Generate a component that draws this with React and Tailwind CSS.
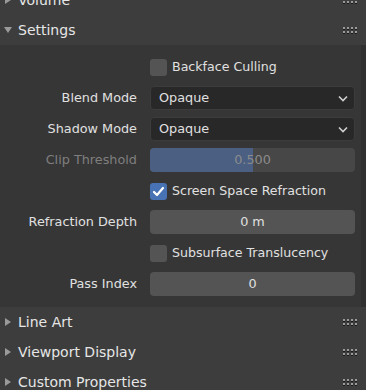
const font = { fontFamily: '"DejaVu Sans", sans-serif' };

function Grip() {
  return (
    <div className="grid grid-cols-4 gap-x-[2px] gap-y-[2px] mr-[9px]">
      {Array.from({ length: 8 }).map((_, i) => (
        <div key={i} className="w-[2px] h-[2px] bg-[#9a9a9a] shadow-[0_1px_0_#1a1a1a]" />
      ))}
    </div>
  );
}

function Header({ title, open }) {
  return (
    <div className="h-[30px] flex items-center bg-[#3d3d3d] text-[#e6e6e6] text-[14px]">
      <div className="w-[18px] flex justify-center">
        {open ? (
          <svg width="8" height="6" viewBox="0 0 8 6" className="ml-[-3px]">
            <path d="M0 0 L8 0 L4 6 Z" fill="#9a9a9a" />
          </svg>
        ) : (
          <svg width="6" height="8" viewBox="0 0 6 8" className="ml-[-3px]">
            <path d="M0 0 L6 4 L0 8 Z" fill="#9a9a9a" />
          </svg>
        )}
      </div>
      <span className="flex-1">{title}</span>
      <Grip />
    </div>
  );
}

function Row({ label, dim, children }) {
  return (
    <div className="h-[24px] flex items-center">
      <div className={`w-[137px] text-right text-[12.8px] ${dim ? "text-[#7f7f7f]" : "text-[#e0e0e0]"}`}>
        {label}
      </div>
      <div className="ml-[13px] w-[205px] h-full">{children}</div>
    </div>
  );
}

function Check({ checked, label }) {
  return (
    <div className="h-[24px] flex items-center pl-[150px]">
      <div
        className={`w-[17px] h-[17px] rounded-[3px] flex items-center justify-center ${
          checked ? "bg-[#4772b3]" : "bg-[#545454]"
        }`}
      >
        {checked && (
          <svg width="13" height="13" viewBox="0 0 13 13">
            <path d="M2 7 L5 10 L11 3" stroke="#fff" strokeWidth="2.2" fill="none" strokeLinecap="round" strokeLinejoin="round" />
          </svg>
        )}
      </div>
      <span className="ml-[5px] text-[12.6px] text-[#e0e0e0]">{label}</span>
    </div>
  );
}

function Select({ value }) {
  return (
    <div className="h-full rounded-[4px] bg-[#282828] border border-[#3c3c3c] flex items-center pl-[8px] pr-[6px] text-[12.8px] text-[#e0e0e0]">
      <span className="flex-1">{value}</span>
      <svg width="10" height="7" viewBox="0 0 10 7">
        <path d="M1 1.5 L5 5.5 L9 1.5" stroke="#d0d0d0" strokeWidth="1.6" fill="none" />
      </svg>
    </div>
  );
}

function Num({ value }) {
  return (
    <div className="h-full rounded-[4px] bg-[#545454] flex items-center justify-center text-[12.8px] text-[#e0e0e0]">
      {value}
    </div>
  );
}

function Slider({ value, frac }) {
  return (
    <div className="relative h-full rounded-[4px] bg-[#474747] overflow-hidden flex items-center justify-center text-[12.8px] text-[#8c8c8c]">
      <div className="absolute left-0 top-0 bottom-0 bg-[#4a5f82]" style={{ width: `${frac * 100}%` }} />
      <span className="relative">{value}</span>
    </div>
  );
}

export default function App() {
  return (
    <div className="w-[366px] h-[390px] overflow-hidden bg-[#303030]" style={font}>
      <div className="h-[15px] overflow-hidden flex flex-col justify-end">
        <div className="shrink-0">
          <Header title="Volume" />
        </div>
      </div>
      <Header title="Settings" open />
      <div className="flex">
        <div className="w-[361px] bg-[#363636] pt-[10px] pb-[11px] flex flex-col gap-[7px]">
          <Check label="Backface Culling" />
          <Row label="Blend Mode">
            <Select value="Opaque" />
          </Row>
          <Row label="Shadow Mode">
            <Select value="Opaque" />
          </Row>
          <Row label="Clip Threshold" dim>
            <Slider value="0.500" frac={0.5} />
          </Row>
          <Check checked label="Screen Space Refraction" />
          <Row label="Refraction Depth">
            <Num value="0 m" />
          </Row>
          <Check label="Subsurface Translucency" />
          <Row label="Pass Index">
            <Num value="0" />
          </Row>
        </div>
        <div className="flex-1 bg-[#303030]" />
      </div>
      <Header title="Line Art" />
      <Header title="Viewport Display" />
      <Header title="Custom Properties" />
    </div>
  );
}
